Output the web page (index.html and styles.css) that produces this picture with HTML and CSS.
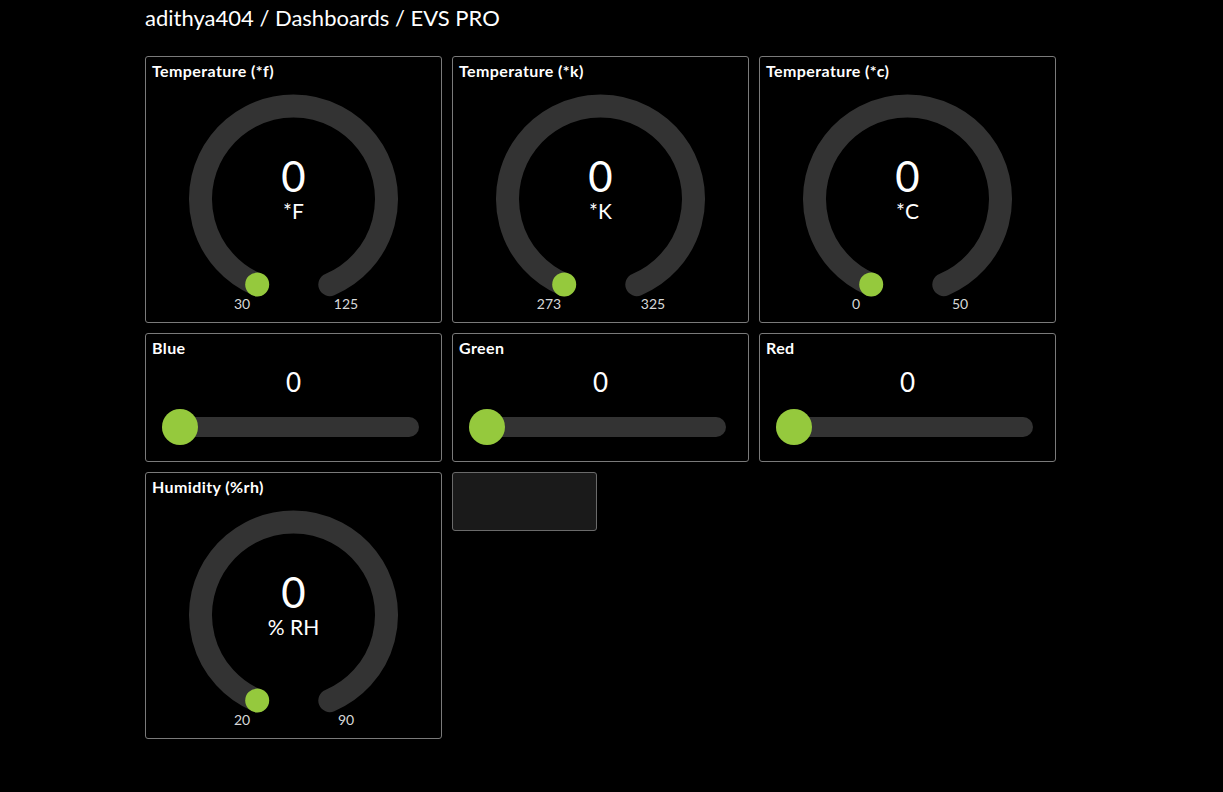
FILE: index.html
```html
<!DOCTYPE html>
<html>
<head>
<meta charset="utf-8">
<link rel="stylesheet" href="styles.css">
</head>
<body>
<div class="page">
  <h1 class="crumbs">adithya404 / Dashboards / EVS PRO</h1>
  <div class="grid">
    <div class="card gauge-card">
      <div class="card-title">Temperature (*f)</div>
      <svg class="gauge" viewBox="0 0 295 242">
        <path class="track" d="M111.2 204.6 A93 93 0 1 1 183.8 204.6"/>
        <circle class="dot" cx="111.2" cy="204.6" r="12"/>
        <text class="g-value" x="147.5" y="112">0</text>
        <text class="g-unit" x="147.5" y="139">*F</text>
        <text class="g-label" x="96" y="229">30</text>
        <text class="g-label" x="200" y="229">125</text>
      </svg>
    </div>
    <div class="card gauge-card">
      <div class="card-title">Temperature (*k)</div>
      <svg class="gauge" viewBox="0 0 295 242">
        <path class="track" d="M111.2 204.6 A93 93 0 1 1 183.8 204.6"/>
        <circle class="dot" cx="111.2" cy="204.6" r="12"/>
        <text class="g-value" x="147.5" y="112">0</text>
        <text class="g-unit" x="147.5" y="139">*K</text>
        <text class="g-label" x="96" y="229">273</text>
        <text class="g-label" x="200" y="229">325</text>
      </svg>
    </div>
    <div class="card gauge-card">
      <div class="card-title">Temperature (*c)</div>
      <svg class="gauge" viewBox="0 0 295 242">
        <path class="track" d="M111.2 204.6 A93 93 0 1 1 183.8 204.6"/>
        <circle class="dot" cx="111.2" cy="204.6" r="12"/>
        <text class="g-value" x="147.5" y="112">0</text>
        <text class="g-unit" x="147.5" y="139">*C</text>
        <text class="g-label" x="96" y="229">0</text>
        <text class="g-label" x="200" y="229">50</text>
      </svg>
    </div>

    <div class="card slider-card">
      <div class="card-title">Blue</div>
      <div class="s-value">0</div>
      <div class="slider"><span class="knob"></span></div>
    </div>
    <div class="card slider-card">
      <div class="card-title">Green</div>
      <div class="s-value">0</div>
      <div class="slider"><span class="knob"></span></div>
    </div>
    <div class="card slider-card">
      <div class="card-title">Red</div>
      <div class="s-value">0</div>
      <div class="slider"><span class="knob"></span></div>
    </div>

    <div class="card gauge-card">
      <div class="card-title">Humidity (%rh)</div>
      <svg class="gauge" viewBox="0 0 295 242">
        <path class="track" d="M111.2 204.6 A93 93 0 1 1 183.8 204.6"/>
        <circle class="dot" cx="111.2" cy="204.6" r="12"/>
        <text class="g-value" x="147.5" y="112">0</text>
        <text class="g-unit" x="147.5" y="139">% RH</text>
        <text class="g-label" x="96" y="229">20</text>
        <text class="g-label" x="200" y="229">90</text>
      </svg>
    </div>
    <div class="card empty-card"></div>
  </div>
</div>
</body>
</html>
```

FILE: styles.css
```css
html, body {
  margin: 0;
  padding: 0;
  background: #000;
  color: #fff;
  font-family: Lato, "Open Sans", sans-serif;
}

.page {
  padding-left: 145px;
}

.crumbs {
  margin: 0;
  padding-top: 5px;
  height: 56px;
  box-sizing: border-box;
  font-size: 22px;
  font-weight: 400;
  line-height: 26px;
  color: #fff;
}

.grid {
  display: grid;
  grid-template-columns: repeat(3, 297px);
  gap: 10px;
  align-items: start;
}

.card {
  box-sizing: border-box;
  border: 1px solid #7a7a7a;
  border-radius: 3px;
  background: #000;
}

.card-title {
  padding: 5px 0 0 6px;
  font-size: 16px;
  font-weight: 700;
  letter-spacing: 0.4px;
  line-height: 18px;
  height: 22px;
  box-sizing: border-box;
}

.gauge-card {
  height: 267px;
  display: flex;
  flex-direction: column;
}

.gauge {
  display: block;
  width: 295px;
  height: 242px;
  margin-top: 1px;
}

.track {
  fill: none;
  stroke: #333333;
  stroke-width: 23;
  stroke-linecap: round;
}

.dot {
  fill: #95c93d;
}

.g-value {
  fill: #fff;
  font-size: 42px;
  text-anchor: middle;
  font-family: Lato, "Open Sans", sans-serif;
}

.g-unit {
  fill: #fff;
  font-size: 21px;
  text-anchor: middle;
  font-family: Lato, "Open Sans", sans-serif;
}

.g-label {
  fill: #d8d8d8;
  font-size: 14px;
  text-anchor: middle;
  font-family: Lato, "Open Sans", sans-serif;
}

.slider-card {
  height: 129px;
  display: flex;
  flex-direction: column;
}

.s-value {
  text-align: center;
  font-size: 26px;
  line-height: 30px;
  margin-top: 11px;
}

.slider {
  position: relative;
  margin: 20px 0 0 16px;
  width: 257px;
  height: 20px;
  border-radius: 10px;
  background: #333333;
}

.knob {
  position: absolute;
  left: 0;
  top: -8px;
  width: 36px;
  height: 36px;
  border-radius: 50%;
  background: #95c93d;
}

.empty-card {
  width: 145px;
  height: 59px;
  background: #1a1a1a;
  border-color: #6a6a6a;
}
```
